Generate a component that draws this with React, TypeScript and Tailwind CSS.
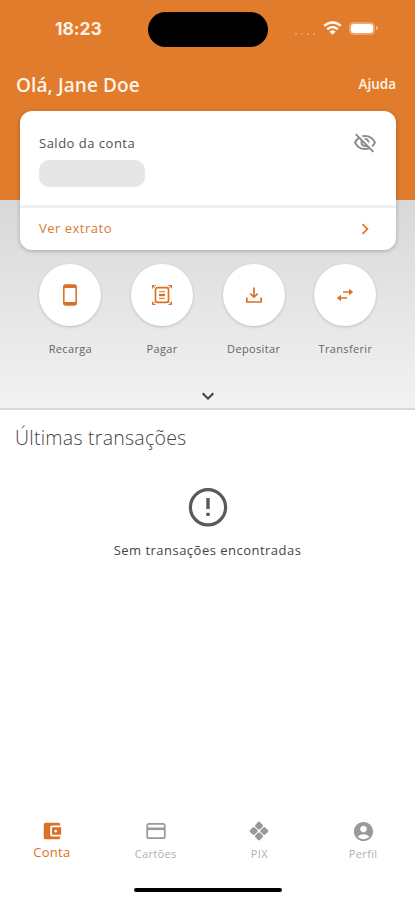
import type { ReactNode } from "react";
import {
  MdAccountBalanceWallet,
  MdAccountCircle,
  MdChevronRight,
  MdKeyboardArrowDown,
  MdOutlineVisibilityOff,
} from "react-icons/md";

function StatusBar() {
  return (
    <div className="flex h-[58px] items-center">
      <span className="ml-[55px] w-[93px] font-[Inter,sans-serif] text-[17.5px] font-bold leading-none tracking-[-0.1px] text-[#fff1e6]">18:23</span>
      <div className="h-[35px] w-[120px] rounded-full bg-black" />
      <div className="ml-[27px] mt-[9px] flex gap-[4px]">
        {[0, 1, 2, 3].map((i) => (
          <i key={i} className="size-[2px] rounded-full bg-[#efa873]" />
        ))}
      </div>
      <svg className="ml-[8px] mt-[-2px] h-[14px] w-[19px]" viewBox="0 0 19 14" fill="none" stroke="#fff6ee" strokeWidth="2.6">
        <path d="M1.2 4.7Q9.5-2 17.8 4.7" />
        <path d="M4.2 8.2Q9.5 3.8 14.8 8.2" />
        <path d="M9.5 13.8 6.4 10.7Q9.5 8 12.6 10.7Z" fill="#fff6ee" stroke="none" />
      </svg>
      <div className="ml-[7px] mt-[-2px] flex h-[13px] w-[26px] items-center rounded-[4px] border border-[#eda068] bg-[#efa873] p-px">
        <div className="h-full w-full rounded-[3px] bg-white" />
      </div>
      <i className="ml-px mt-[-2px] h-[4px] w-[2px] rounded-r bg-[#f2b78c]" />
    </div>
  );
}

function Action({ label, children }: { label: string; children: ReactNode }) {
  return (
    <div className="flex w-[91.7px] flex-col items-center">
      <div className="flex size-[62px] items-center justify-center rounded-full bg-white text-[#dc7125] shadow-[0_1px_3px_rgba(0,0,0,0.18)]">{children}</div>
      <span className="mt-[15px] text-[11px] leading-[16px] tracking-[0.35px] text-[#656565]">{label}</span>
    </div>
  );
}

function Tab({ label, active, children }: { label: string; active?: boolean; children: ReactNode }) {
  return (
    <div className={active ? "flex flex-1 flex-col items-center text-[#dc7125]" : "flex flex-1 flex-col items-center text-[#999]"}>
      {children}
      <span className={active ? "mt-[2px] text-[13px] leading-[16px] tracking-[0.3px]" : "mt-[4px] text-[11px] leading-[16px] tracking-[0.35px] text-[#b0b0b0]"}>{label}</span>
    </div>
  );
}

export default function App() {
  return (
    <div className="flex h-[900px] w-[415px] flex-col overflow-hidden bg-white font-['Open_Sans',sans-serif]">
      <section className="h-[410px] shrink-0 border-b-2 border-[#d9d9d9] bg-[linear-gradient(to_bottom,#e07c2c_200px,#d8d8d8_200px,#f2f2f2_408px)]">
        <StatusBar />
        <header className="flex h-[53px] items-center justify-between pl-[16px] pr-[19px] text-[#fff3ea]">
          <h1 className="text-[19px] font-semibold leading-[24px] tracking-[0.1px]">Olá, Jane Doe</h1>
          <span className="text-[13.5px] font-semibold">Ajuda</span>
        </header>
        <div className="ml-[20px] flex h-[139px] w-[376px] flex-col rounded-[12px] bg-white shadow-[0_1px_4px_rgba(0,0,0,0.25)]">
          <div className="flex h-[97px] shrink-0 justify-between border-b-[3px] border-[#f0f0f0] pl-[19px] pr-[19px] pt-[19px]">
            <div className="pt-[4px]">
              <p className="text-[13px] leading-[18px] tracking-[0.5px] text-[#505050]">Saldo da conta</p>
              <div className="mt-[8px] h-[27px] w-[106px] rounded-[10px] bg-[#e6e6e6]" />
            </div>
            <MdOutlineVisibilityOff className="mt-px size-[24px] text-[#8c8c8c]" />
          </div>
          <div className="flex flex-1 items-center justify-between pl-[19px] pr-[20px] text-[#e07833]">
            <span className="text-[13px] tracking-[0.5px]">Ver extrato</span>
            <MdChevronRight className="size-[22px]" />
          </div>
        </div>
        <div className="ml-[24.5px] mt-[14px] flex">
          <Action label="Recarga">
            <svg width="16" height="22" viewBox="0 0 16 22" fill="none" stroke="currentColor">
              <rect x="1.8" y="1" width="12.4" height="20" rx="2" strokeWidth="1.6" />
              <path d="M2 2.5h12M2 19.5h12" strokeWidth="3" />
            </svg>
          </Action>
          <Action label="Pagar">
            <svg width="22" height="22" viewBox="0 0 22 22" fill="none" stroke="currentColor" strokeWidth="1.7">
              <rect x="4.5" y="3.7" width="13" height="14.6" rx="2" />
              <path d="M1.5 4.5v-3h3M17.5 1.5h3v3M1.5 17.5v3h3M17.5 20.5h3v-3M1.5 1.5l3 3M20.5 1.5l-3 3M1.5 20.5l3-3M20.5 20.5l-3-3" strokeWidth="1" />
              <path d="M8 7.7h6M8 14.3h6" strokeWidth="1" />
              <path d="M8 11h6" strokeWidth="2.4" />
            </svg>
          </Action>
          <Action label="Depositar">
            <svg width="18" height="18" viewBox="0 0 18 18" fill="none" stroke="currentColor" strokeWidth="1.7">
              <path d="M9 1.5v9M5.2 7.5 9 11.1l3.8-3.6M1.8 11.5V16h14.4v-4.5" strokeLinejoin="round" />
            </svg>
          </Action>
          <Action label="Transferir">
            <svg width="18" height="14" viewBox="0 0 18 14" fill="none" stroke="currentColor" strokeWidth="1.6">
              <path d="M7 4h7.5M11 10H3.5" />
              <path d="m13 .8 4.2 3.2L13 7.2ZM5 6.8.8 10 5 13.2Z" fill="currentColor" stroke="none" />
            </svg>
          </Action>
        </div>
        <MdKeyboardArrowDown className="mx-auto mt-[27px] size-[24px] text-[#404040]" />
      </section>

      <main className="flex-1">
        <h2 className="ml-[15px] mt-[15px] text-[19.5px] font-light leading-[26px] tracking-[0.25px] text-[#444]">Últimas transações</h2>
        <div className="mt-[33px] flex flex-col items-center">
          <svg className="size-[46px] text-[#5a5a5a]" viewBox="0 0 46 46" fill="none" stroke="currentColor" strokeWidth="3.2">
            <circle cx="23" cy="23.3" r="17.6" />
            <path d="M23 14v11M23 28.7v3.4" strokeWidth="3.4" />
          </svg>
          <p className="mt-[11px] text-[13px] leading-[18px] tracking-[0.48px] text-[#444]">Sem transações encontradas</p>
        </div>
      </main>

      <nav className="flex h-[68px] shrink-0">
        <Tab label="Conta" active><MdAccountBalanceWallet className="size-[22px]" /></Tab>
        <Tab label="Cartões">
          <svg className="size-[22px]" viewBox="0 0 22 22" fill="none" stroke="currentColor" strokeWidth="1.7">
            <rect x="2.2" y="3.8" width="17.6" height="14.4" rx="2" />
            <path d="M2 8.8h18" strokeWidth="2.6" />
          </svg>
        </Tab>
        <Tab label="PIX">
          <svg className="size-[22px]" viewBox="0 0 22 22" fill="currentColor">
            <g transform="rotate(45 11 11)">
              <rect x="4" y="4" width="6.5" height="6.5" rx="1.4" />
              <rect x="11.5" y="4" width="6.5" height="6.5" rx="1.4" />
              <rect x="4" y="11.5" width="6.5" height="6.5" rx="1.4" />
              <rect x="11.5" y="11.5" width="6.5" height="6.5" rx="1.4" />
            </g>
          </svg>
        </Tab>
        <Tab label="Perfil"><MdAccountCircle className="size-[23px] mb-[-1px]" /></Tab>
      </nav>
      <div className="mx-auto mb-[8px] h-[4px] w-[148px] shrink-0 rounded-full bg-black" />
    </div>
  );
}
